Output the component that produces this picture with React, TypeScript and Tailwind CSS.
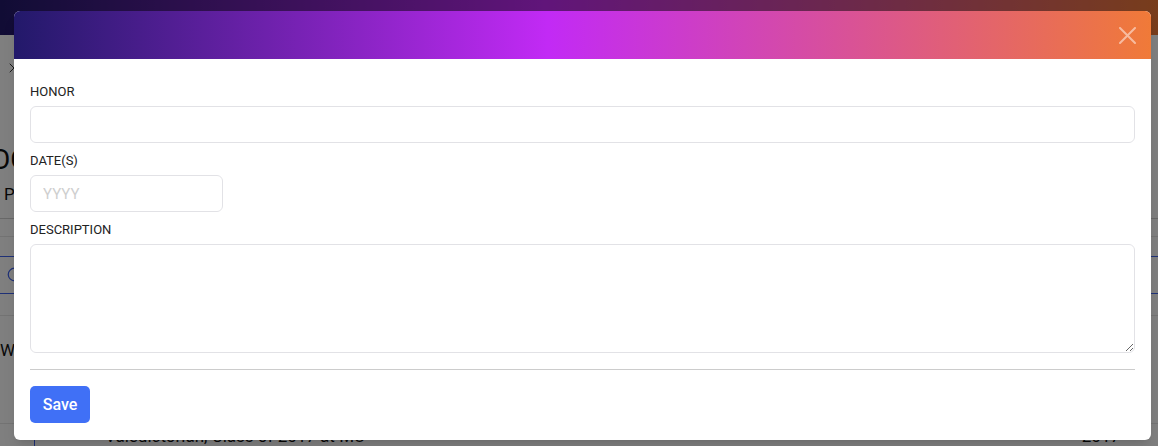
import { X, Circle } from "lucide-react";

const gradient =
  "bg-[linear-gradient(to_right,#22196a_0%,#c22af5_47%,#f07a38_100%)]";

function Field({ label, children }: { label: string; children: React.ReactNode }) {
  return (
    <div className="mb-[7px]">
      <label className="mb-[4px] block text-[13px] leading-[21px] text-[#222]">{label}</label>
      {children}
    </div>
  );
}

export default function App() {
  return (
    <div className="relative h-[446px] w-[1158px] overflow-hidden bg-white font-['Roboto',sans-serif]">
      {/* page behind the dialog */}
      <div className={`h-[35px] ${gradient}`} />
      <div className="flex flex-col">
        <div className="pl-[6px] pt-[25px] text-[#333]">
          <X className="h-4 w-4" strokeWidth={1.5} />
        </div>
        <div className="-ml-[9px] mt-[68px] text-[28px] leading-8 text-[#111]">OC</div>
        <div className="-ml-[5px] mt-[6px] text-[17px] text-[#111]">- P</div>
        <div className="mt-[10px] border-t border-[#d0d0d0]" />
        <div className="mt-[17px] border-t border-[#e6e6e6]" />
        <div className="mt-[19px] flex h-[38px] items-center border-y border-[#3f62ee] pl-[7px] text-[#3f62ee]">
          <Circle className="h-[15px] w-[15px]" strokeWidth={2} />
        </div>
        <div className="mt-[21px] border-t border-[#e6e6e6]" />
        <div className="mt-[22px] text-[17px] text-[#111]">W</div>
        <div className="mt-[60px] flex border-t border-[#e6e6e6]">
          <div className="w-[35px] border-r border-[#3f62ee]" />
          <div className="flex-1 pl-[70px] text-[17px] text-[#111]">Valedictorian, Class of 2017 at MU</div>
          <div className="pr-[38px] text-[17px] text-[#111]">2017</div>
        </div>
      </div>

      {/* backdrop */}
      <div className="absolute inset-0 bg-black/50" />

      {/* dialog */}
      <div className="absolute left-[14px] top-[11px] w-[1137px] overflow-hidden rounded-[6px] bg-white shadow-lg">
        <div className={`flex h-[48px] items-center justify-end pr-[15px] ${gradient}`}>
          <svg width="17" height="17" viewBox="0 0 17 17" className="text-white/50">
            <path d="M1 1L16 16M16 1L1 16" stroke="currentColor" strokeWidth="2" strokeLinecap="round" />
          </svg>
        </div>
        <div className="px-4 pb-[17px] pt-[22px]">
          <Field label="HONOR">
            <input className="block h-[37px] w-full rounded-[6px] border border-[#e2e2e6] px-3 text-sm outline-none" />
          </Field>
          <Field label="DATE(S)">
            <input
              placeholder="YYYY"
              className="block h-[37px] w-[193px] rounded-[6px] border border-[#e2e2e6] px-3 text-[15px] outline-none placeholder:text-[#cfcfcf]"
            />
          </Field>
          <div>
            <label className="mb-[4px] block text-[13px] leading-[21px] text-[#222]">DESCRIPTION</label>
            <textarea className="block h-[109px] w-full rounded-[6px] border border-[#e2e2e6] px-3 py-2 text-sm outline-none" />
          </div>
          <hr className="mt-[16px] border-t border-[#cccccc]" />
          <button className="mt-[16px] h-[37px] w-[60px] rounded-[5px] bg-[#4070f6] text-[16px] font-medium text-white">
            Save
          </button>
        </div>
      </div>
    </div>
  );
}
